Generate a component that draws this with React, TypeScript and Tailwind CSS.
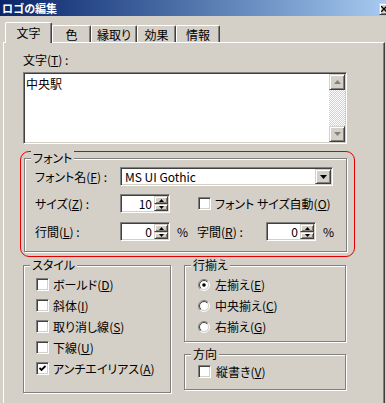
import React, { useId } from "react";

const sunken =
  "border border-t-[#808080] border-l-[#808080] border-b-white border-r-white shadow-[inset_1px_1px_0_#404040,inset_-1px_-1px_0_#d4d0c8]";
const raised =
  "border border-t-[#d4d0c8] border-l-[#d4d0c8] border-b-[#404040] border-r-[#404040] shadow-[inset_1px_1px_0_#fff,inset_-1px_-1px_0_#808080] bg-[#d4d0c8]";
const etched =
  "relative border border-[#808080] shadow-[inset_1px_1px_0_#fff,1px_1px_0_#fff]";

function GroupLabel({ children }: { children: React.ReactNode }) {
  return (
    <span className="absolute -top-[8px] left-[6px] px-[2px] bg-[#d4d0c8] leading-[14px]">
      {children}
    </span>
  );
}

function Tri({ down, color = "#000", w = 7 }: { down?: boolean; color?: string; w?: number }) {
  const h = Math.ceil(w / 2);
  return (
    <svg width={w} height={h} viewBox={`0 0 ${w} ${h}`} className="block">
      {down ? (
        <polygon points={`0,0 ${w},0 ${w / 2},${h}`} fill={color} />
      ) : (
        <polygon points={`0,${h} ${w},${h} ${w / 2},0`} fill={color} />
      )}
    </svg>
  );
}

function Spin({ value }: { value: string }) {
  return (
    <div className={`${sunken} w-[50px] h-[19px] p-[1px] flex bg-white`}>
      <div className="flex-1 text-right pr-[2px] leading-[15px]">{value}</div>
      <div className="w-[14px] flex flex-col">
        <div className={`${raised} h-[8px] flex items-center justify-center`}>
          <Tri w={5} />
        </div>
        <div className={`${raised} h-[7px] flex items-center justify-center`}>
          <Tri w={5} down />
        </div>
      </div>
    </div>
  );
}

function Check({ checked }: { checked?: boolean }) {
  return (
    <div className={`${sunken} w-[13px] h-[13px] shrink-0 bg-white flex items-center justify-center`}>
      {checked && (
        <svg width="7" height="7" viewBox="0 0 7 7" className="block">
          <polyline points="0.5,3 2.5,5 6.5,1" fill="none" stroke="#000" strokeWidth="1.8" />
        </svg>
      )}
    </div>
  );
}

function Radio({ checked }: { checked?: boolean }) {
  const id = useId().replace(/:/g, "");
  return (
    <svg width="12" height="12" viewBox="0 0 12 12" className="block shrink-0">
      <defs>
        <linearGradient id={`o${id}`} x1="0" y1="0" x2="1" y2="1">
          <stop offset="0.5" stopColor="#808080" />
          <stop offset="0.5" stopColor="#ffffff" />
        </linearGradient>
        <linearGradient id={`i${id}`} x1="0" y1="0" x2="1" y2="1">
          <stop offset="0.5" stopColor="#404040" />
          <stop offset="0.5" stopColor="#d4d0c8" />
        </linearGradient>
      </defs>
      <circle cx="6" cy="6" r="5.5" fill="none" stroke={`url(#o${id})`} strokeWidth="1" />
      <circle cx="6" cy="6" r="4.5" fill="#fff" stroke={`url(#i${id})`} strokeWidth="1" />
      {checked && <circle cx="6" cy="6" r="1.8" fill="#000" />}
    </svg>
  );
}

function Tab({ children, w, selected }: { children: React.ReactNode; w: string; selected?: boolean }) {
  if (selected) {
    return (
      <div
        className={`${w} h-[21px] -mb-[1px] relative z-10 bg-[#d4d0c8] border-l border-t border-r border-l-white border-t-white border-r-[#404040] rounded-t-[2px] shadow-[inset_-1px_0_0_#808080] flex justify-center pt-[2px] leading-[16px]`}
      >
        {children}
      </div>
    );
  }
  return (
    <div
      className={`${w} h-[17px] bg-[#d4d0c8] border-l border-t border-r border-l-white border-t-white border-r-[#404040] rounded-t-[2px] shadow-[inset_-1px_0_0_#808080] flex justify-center pt-[1px] leading-[15px]`}
    >
      {children}
    </div>
  );
}

export default function App() {
  return (
    <div className="w-[386px] h-[403px] overflow-hidden bg-[#d4d0c8] text-black text-[12px] leading-[16px] font-['Noto_Sans_CJK_JP',sans-serif] [font-feature-settings:'palt']">
      {/* Title bar */}
      <div className="h-[16px] bg-linear-to-r from-[#0a246a] to-[#a6caf0] flex items-center justify-between overflow-hidden">
        <span className="pl-[2px] text-white font-bold text-[11px] leading-[14px]">ロゴの編集</span>
        <div className={`${raised} w-[16px] h-[12px] mr-[-9px] mt-[1px] flex items-center pl-[1px] shrink-0`}>
          <svg width="6" height="6" viewBox="0 0 6 6" className="block">
            <path d="M0 0 L6 6 M6 0 L0 6" stroke="#000" strokeWidth="1.3" />
          </svg>
        </div>
      </div>

      {/* Tabs */}
      <div className="h-[26px] flex items-end pl-[5px]">
        <Tab w="w-[47px]" selected>
          文字
        </Tab>
        <Tab w="w-[39px]">色</Tab>
        <Tab w="w-[46px]">縁取り</Tab>
        <Tab w="w-[39px]">効果</Tab>
        <Tab w="w-[44px]">情報</Tab>
      </div>

      {/* Panel */}
      <div className="ml-[3px] w-[382px] h-[361px] border-l border-t border-r border-l-white border-t-white border-r-[#404040] shadow-[inset_-1px_0_0_#808080] flex flex-col">
        <div className="mt-[9px] ml-[19px] h-[16px]">
          文字(<span className="underline">T</span>) :
        </div>

        {/* Text area */}
        <div className={`${sunken} mt-[4px] ml-[19px] w-[324px] h-[72px] p-[1px] flex bg-white`}>
          <div className="flex-1 pl-[1px] pt-[2px] leading-[16px]">中央駅</div>
          <div className="w-[16px] flex flex-col">
            <div className={`${raised} h-[16px] flex items-center justify-center`}>
              <Tri color="#808080" />
            </div>
            <div className="flex-1 bg-[repeating-conic-gradient(#ffffff_0_25%,#d4d0c8_0_50%)] bg-[length:2px_2px]" />
            <div className={`${raised} h-[16px] flex items-center justify-center`}>
              <Tri color="#808080" down />
            </div>
          </div>
        </div>

        {/* Red annotation around font group */}
        <div className="mt-[7px] ml-[16px] w-[335px] h-[106px] border border-[#e00000] rounded-[9px] pl-[3px] pt-[6px]">
          <div className={`${etched} w-[323px] h-[94px] pt-[8px] flex flex-col`}>
            <GroupLabel>フォント</GroupLabel>
            <div className="h-[19px] flex items-center pl-[10px]">
              <div className="w-[85px]">
                フォント名(<span className="underline">F</span>) :
              </div>
              <div className={`${sunken} w-[213px] h-[19px] p-[1px] flex bg-white`}>
                <div className="flex-1 pl-[3px] leading-[15px]">MS UI Gothic</div>
                <div className={`${raised} w-[16px] h-[15px] flex items-center justify-center`}>
                  <Tri down />
                </div>
              </div>
            </div>
            <div className="mt-[8px] h-[19px] flex items-center pl-[10px]">
              <div className="w-[85px]">
                サイズ(<span className="underline">Z</span>) :
              </div>
              <Spin value="10" />
              <div className="ml-[28px]">
                <Check />
              </div>
              <div className="ml-[4px]">
                フォント サイズ自動(<span className="underline">O</span>)
              </div>
            </div>
            <div className="mt-[9px] h-[19px] flex items-center pl-[10px]">
              <div className="w-[85px]">
                行間(<span className="underline">L</span>) :
              </div>
              <Spin value="0" />
              <div className="ml-[7px] w-[20px]">%</div>
              <div className="w-[69px]">
                字間(<span className="underline">R</span>) :
              </div>
              <Spin value="0" />
              <div className="ml-[7px]">%</div>
            </div>
          </div>
        </div>

        {/* Bottom groups */}
        <div className="mt-[8px] ml-[19px] flex gap-[13px] items-start">
          <div className={`${etched} w-[148px] h-[128px] pt-[8px] pl-[12px] flex flex-col`}>
            <GroupLabel>スタイル</GroupLabel>
            {[
              ["ボールド", "D", false],
              ["斜体", "I", false],
              ["取り消し線", "S", false],
              ["下線", "U", false],
              ["アンチエイリアス", "A", true],
            ].map(([label, key, checked]) => (
              <div key={key as string} className="h-[21px] flex items-center">
                <Check checked={checked as boolean} />
                <span className="ml-[4px]">
                  {label as string}(<span className="underline">{key as string}</span>)
                </span>
              </div>
            ))}
          </div>

          <div className="w-[162px] flex flex-col gap-[12px]">
            <div className={`${etched} h-[77px] pt-[8px] pl-[13px] flex flex-col`}>
              <GroupLabel>行揃え</GroupLabel>
              {[
                ["左揃え", "E", true],
                ["中央揃え", "C", false],
                ["右揃え", "G", false],
              ].map(([label, key, checked]) => (
                <div key={key as string} className="h-[21px] flex items-center">
                  <Radio checked={checked as boolean} />
                  <span className="ml-[5px]">
                    {label as string}(<span className="underline">{key as string}</span>)
                  </span>
                </div>
              ))}
            </div>
            <div className={`${etched} h-[36px] pt-[10px] pl-[13px] flex flex-col`}>
              <GroupLabel>方向</GroupLabel>
              <div className="h-[13px] flex items-center">
                <Check />
                <span className="ml-[5px]">
                  縦書き(<span className="underline">V</span>)
                </span>
              </div>
            </div>
          </div>
        </div>
      </div>
    </div>
  );
}
